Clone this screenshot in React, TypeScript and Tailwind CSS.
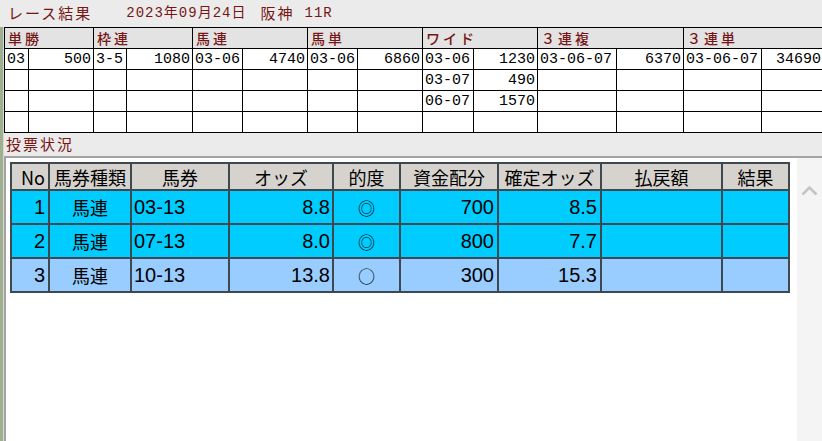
const GOTHIC = "font-['Noto_Sans_CJK_JP',sans-serif]";
const MONO = "font-['Liberation_Mono','Noto_Sans_CJK_JP',monospace]";

const topCols = [24, 65, 33, 66, 50, 65, 50, 65, 51, 64, 79, 67, 78, 62];
const topHeads = ["単勝", "枠連", "馬連", "馬単", "ワイド", "３連複", "３連単"];
const topRows: string[][] = [
  ["03", "500", "3-5", "1080", "03-06", "4740", "03-06", "6860", "03-06", "1230", "03-06-07", "6370", "03-06-07", "34690"],
  ["", "", "", "", "", "", "", "", "03-07", "490", "", "", "", ""],
  ["", "", "", "", "", "", "", "", "06-07", "1570", "", "", "", ""],
  ["", "", "", "", "", "", "", "", "", "", "", "", "", ""],
];

const betCols = [38, 82, 98, 104, 67, 98, 103, 121, 67];
const betHeads = ["No", "馬券種類", "馬券", "オッズ", "的度", "資金配分", "確定オッズ", "払戻額", "結果"];
const bets = [
  { no: "1", kind: "馬連", ticket: "03-13", odds: "8.8", mark: "◎", money: "700", fixed: "8.5", bg: "bg-[#00ccff]" },
  { no: "2", kind: "馬連", ticket: "07-13", odds: "8.0", mark: "◎", money: "800", fixed: "7.7", bg: "bg-[#00ccff]" },
  { no: "3", kind: "馬連", ticket: "10-13", odds: "13.8", mark: "○", money: "300", fixed: "15.3", bg: "bg-[#99ccff]" },
];

export default function App() {
  return (
    <div className="w-[822px] h-[441px] overflow-hidden flex flex-col bg-[#ebebeb]">
      {/* タイトル */}
      <div className={`h-[27px] shrink-0 flex items-center pl-[8px] text-[#771616] text-[15px] tracking-[2px] ${GOTHIC}`}>
        <span>レース結果</span>
        <span className={`ml-[34px] text-[14px] tracking-[1px] ${MONO}`}>2023年09月24日</span>
        <span className="ml-[14px]">阪神</span>
        <span className={`ml-[10px] text-[14px] tracking-[1px] ${MONO}`}>11R</span>
      </div>

      <div className="flex flex-1 min-h-0">
        <div className="w-[4px] shrink-0 bg-[#9fb08e] border-r border-[#d8d8d8]" />

        <div className="flex-1 min-w-0 flex flex-col">
          {/* 払戻 */}
          <div className="overflow-hidden">
            <table className="table-fixed border-collapse w-[819px]">
              <colgroup>
                {topCols.map((w, i) => (
                  <col key={i} style={{ width: w }} />
                ))}
              </colgroup>
              <thead>
                <tr className="h-[21px] bg-[#e3e3e3]">
                  {topHeads.map((h) => (
                    <th
                      key={h}
                      colSpan={2}
                      className={`border border-black text-left font-medium pl-[3px] text-[14px] tracking-[3px] leading-none text-[#771616] ${GOTHIC}`}
                    >
                      {h}
                    </th>
                  ))}
                </tr>
              </thead>
              <tbody>
                {topRows.map((row, r) => (
                  <tr key={r} className="h-[21px] bg-white">
                    {row.map((c, i) => (
                      <td
                        key={i}
                        className={`border border-black px-[2px] text-[15px] leading-none whitespace-nowrap overflow-hidden ${MONO} ${
                          i % 2 === 0 ? "text-left" : "text-right"
                        }`}
                      >
                        {c}
                      </td>
                    ))}
                  </tr>
                ))}
              </tbody>
            </table>
          </div>

          <div className={`h-[23px] shrink-0 flex items-center pl-[2px] text-[15px] tracking-[2px] text-[#771616] ${GOTHIC}`}>
            投票状況
          </div>

          {/* 投票 */}
          <div className="flex-1 flex border-t-2 border-l-2 border-[#a3a3a3] bg-white">
            <div className="flex-1 pl-[4px] pt-[4px]">
              <table className="table-fixed border-collapse w-[778px]">
                <colgroup>
                  {betCols.map((w, i) => (
                    <col key={i} style={{ width: w }} />
                  ))}
                </colgroup>
                <thead>
                  <tr className="h-[27px] bg-[#d6d3ce]">
                    {betHeads.map((h, i) => (
                      <th
                        key={h}
                        className={`border-2 border-[#3d4850] font-normal text-[18px] leading-none text-black ${GOTHIC} ${
                          i === 0 ? "text-right pr-[3px]" : "text-center"
                        }`}
                      >
                        {h}
                      </th>
                    ))}
                  </tr>
                </thead>
                <tbody>
                  {bets.map((b) => (
                    <tr key={b.no} className={`h-[34px] ${b.bg} text-black font-['Liberation_Sans','Noto_Sans_CJK_JP',sans-serif] text-[20px] leading-none`}>
                      <td className="border-2 border-[#3d4850] text-right pr-[3px]">{b.no}</td>
                      <td className={`border-2 border-[#3d4850] text-center text-[18px] ${GOTHIC}`}>{b.kind}</td>
                      <td className="border-2 border-[#3d4850] text-left pl-[2px]">{b.ticket}</td>
                      <td className="border-2 border-[#3d4850] text-right pr-[2px]">{b.odds}</td>
                      <td className={`border-2 border-[#3d4850] text-center text-[17px] ${GOTHIC}`}>{b.mark}</td>
                      <td className="border-2 border-[#3d4850] text-right pr-[3px]">{b.money}</td>
                      <td className="border-2 border-[#3d4850] text-right pr-[3px]">{b.fixed}</td>
                      <td className="border-2 border-[#3d4850]" />
                      <td className="border-2 border-[#3d4850]" />
                    </tr>
                  ))}
                </tbody>
              </table>
            </div>

            <div className="w-[25px] shrink-0 bg-[#f4f4f4] flex justify-center pt-[27px]">
              <svg width="17" height="11" viewBox="0 0 17 11" fill="none">
                <path d="M1.5 9.5 L8.5 2.5 L15.5 9.5" stroke="#c4c4c4" strokeWidth="2.6" />
              </svg>
            </div>
          </div>
        </div>
      </div>
    </div>
  );
}
